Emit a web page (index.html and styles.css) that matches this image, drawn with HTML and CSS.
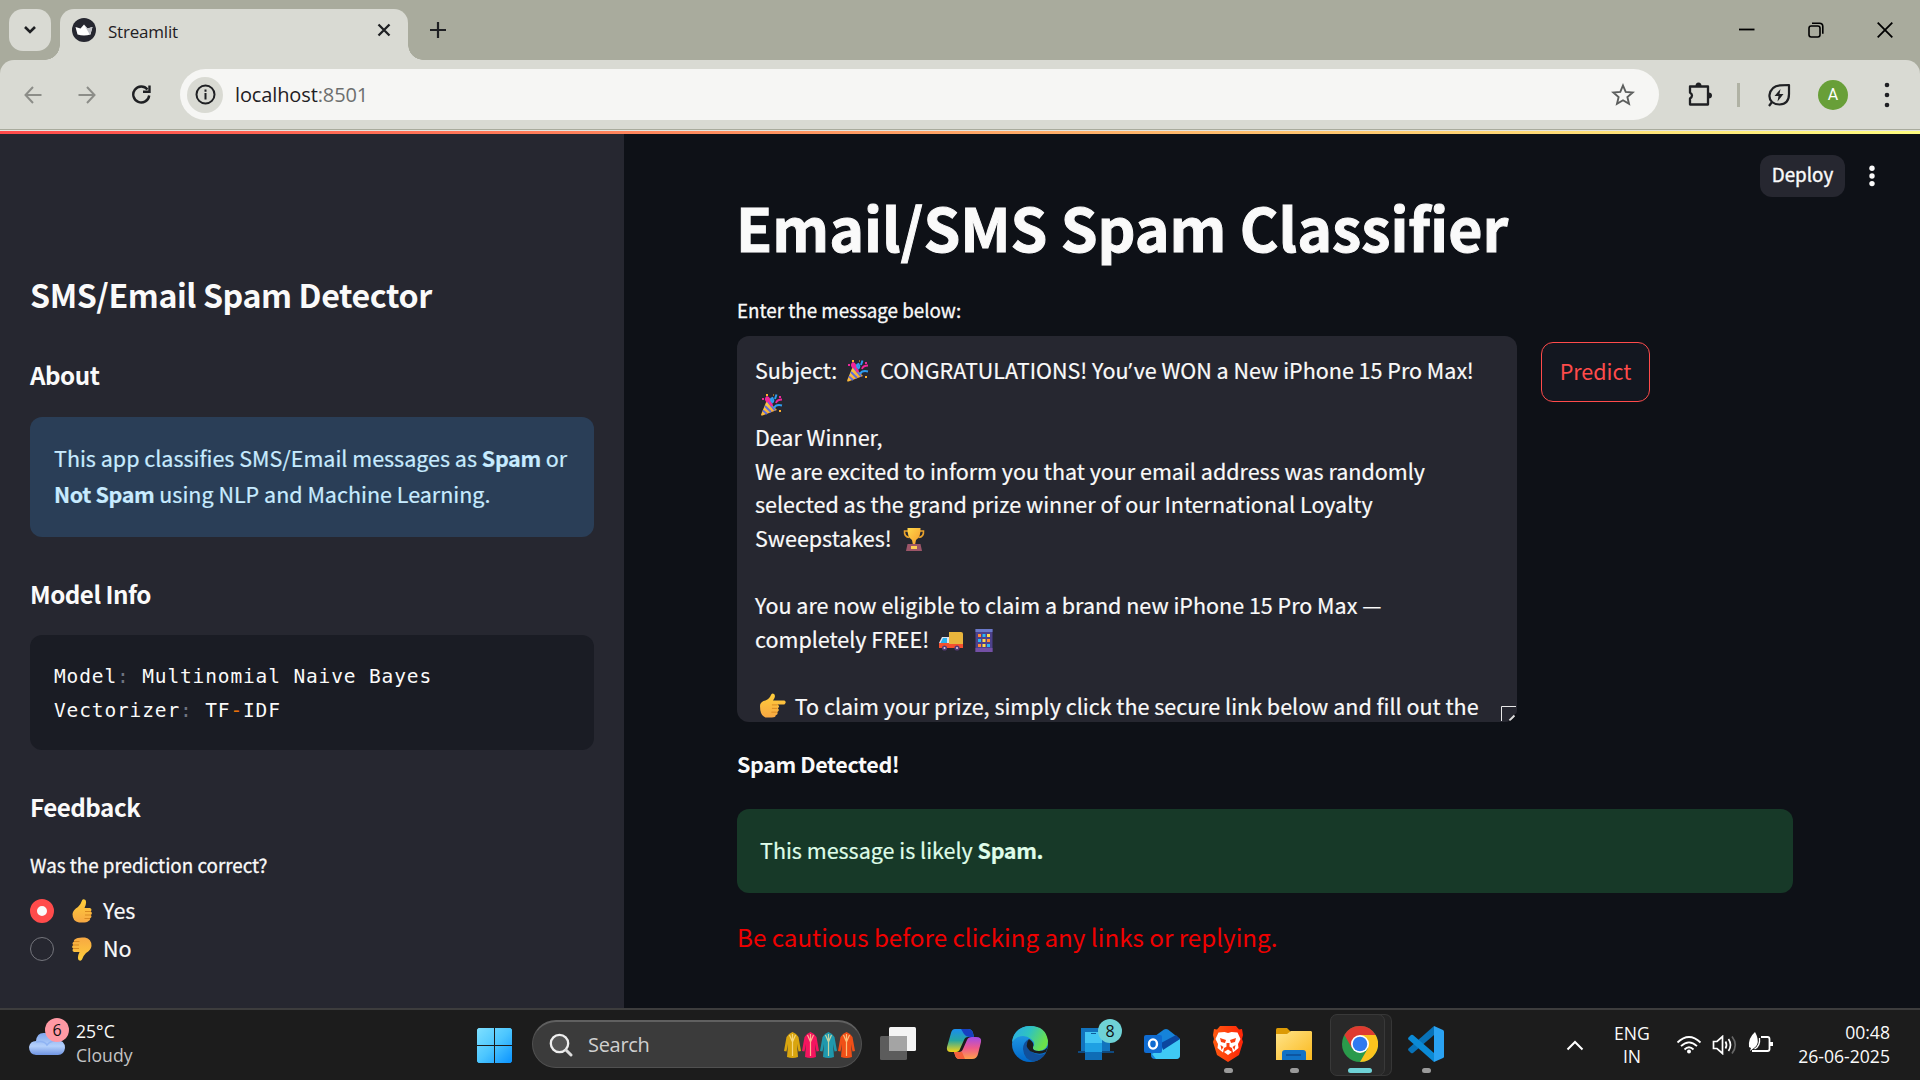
FILE: index.html
```html
<!DOCTYPE html>
<html lang="en">
<head>
<meta charset="utf-8">
<title>Streamlit</title>
<link rel="stylesheet" href="styles.css">
</head>
<body>
<svg class="defs" width="0" height="0" aria-hidden="true">
  <defs>
    <linearGradient id="gold" x1="0" y1="0" x2="1" y2="1"><stop offset="0" stop-color="#ffd84a"/><stop offset="1" stop-color="#f59a2c"/></linearGradient>
    <linearGradient id="hand" x1="0" y1="0" x2="0" y2="1"><stop offset="0" stop-color="#ffcf3a"/><stop offset="1" stop-color="#f7a843"/></linearGradient>
    <linearGradient id="win" x1="0" y1="0" x2="1" y2="1"><stop offset="0" stop-color="#7fe0ff"/><stop offset=".5" stop-color="#4cc6ff"/><stop offset="1" stop-color="#0a93ff"/></linearGradient>
    <linearGradient id="cloud" x1="0" y1="0" x2="0" y2="1"><stop offset="0" stop-color="#7ea6ee"/><stop offset=".6" stop-color="#b4d0fb"/><stop offset="1" stop-color="#6f94e2"/></linearGradient>
    <linearGradient id="edgeA" x1="0" y1="0" x2="1" y2=".4"><stop offset="0" stop-color="#2aa8ec"/><stop offset=".5" stop-color="#2fc3c0"/><stop offset="1" stop-color="#6be04b"/></linearGradient>
    <linearGradient id="edgeB" x1="0" y1="0" x2="0" y2="1"><stop offset="0" stop-color="#2aa6ea"/><stop offset="1" stop-color="#0067c9"/></linearGradient>
    <linearGradient id="copA" x1="0" y1="0" x2="0" y2="1"><stop offset="0" stop-color="#1a8df0"/><stop offset=".5" stop-color="#27a7a0"/><stop offset="1" stop-color="#f5d314"/></linearGradient>
    <linearGradient id="copB" x1="0" y1="0" x2="0" y2="1"><stop offset="0" stop-color="#a14be8"/><stop offset=".5" stop-color="#ee5a8c"/><stop offset="1" stop-color="#ffa04a"/></linearGradient>
    <linearGradient id="folder" x1="0" y1="0" x2="1" y2="1"><stop offset="0" stop-color="#ffe48a"/><stop offset="1" stop-color="#fbb91e"/></linearGradient>
    <linearGradient id="brave" x1="0" y1="0" x2="1" y2="0"><stop offset="0" stop-color="#ff5a10"/><stop offset="1" stop-color="#ff2508"/></linearGradient>
    <symbol id="popper" viewBox="0 0 24 24">
      <path d="M7 7 17 17 2.500 22.500Q0.500 23 1.300 21Z" fill="url(#gold)"/>
      <path d="M5 13 11 19M3 17.500 7 21M8 9 15 17.500" stroke="#5b6be0" stroke-width="1.800"/>
      <path d="M8 9Q5 6 7 4.500Q9 5 10 9L12 13" fill="none" stroke="#f0269a" stroke-width="2.600"/>
      <path d="M13 10Q9 6 12.500 5Q14 7 13 9M15 6 16.500 1.500M14 15Q16 11 22 12.500" fill="none" stroke="#2f9df0" stroke-width="2"/>
      <path d="M16 10Q17 6.500 22 6.500" fill="none" stroke="#f0269a" stroke-width="1.800"/>
      <path d="M6 1h2v2H6zM19 17h2v2h-2zM13 1.500h1v1h-1z" fill="#ffb02e"/><path d="M2 5h2v2H2zM19 3h2v2h-2z" fill="#e82a9a"/>
    </symbol>
    <symbol id="trophy" viewBox="0 0 24 24">
      <path d="M6 4H2.500q-.5 6 5 6.500M18 4h3.500q.5 6-5 6.500" fill="none" stroke="#e9a32c" stroke-width="1.600"/>
      <path d="M5.500 1h13Q19 10 14 13L13 18H11L10 13Q5 10 5.500 1Z" fill="url(#gold)"/>
      <path d="M5.500 17h13l1.500 7H4Z" fill="#9c5568"/><path d="M9 19h6v3H9z" fill="#ffcd54"/>
    </symbol>
    <symbol id="truck" viewBox="0 0 24 24">
      <path d="M10 4h12q2 0 2 2v12H10z" fill="#e8b53c"/><path d="M3 9h7v10H0v-4z" fill="#dfe3f2"/><path d="M4 10h4v5H1.500z" fill="#2bb2ee"/>
      <path d="M0 15h10v1h14v4H0z" fill="#f4502f"/><circle cx="5.500" cy="20" r="2.600" fill="#553a76"/><circle cx="18" cy="20" r="2.600" fill="#553a76"/><circle cx="5.500" cy="20" r="1" fill="#d8d4ea"/><circle cx="18" cy="20" r="1" fill="#d8d4ea"/>
    </symbol>
    <symbol id="tower" viewBox="0 0 24 24">
      <path d="M3.500 1h17v23h-17z" fill="#4d418c"/><path d="M3.500 1h17v3h-17z" fill="#6a78c9"/><path d="M3.500 20h17v4h-17z" fill="#7450a5"/>
      <path d="M6 6h3v3H6zM15 11h3v3h-3zM6 16h3v3H6z" fill="#ff8a35"/><path d="M10.500 6h3v3h-3zM6 11h3v3H6zM15 16h3v3h-3z" fill="#29b6f6"/><path d="M15 6h3v3h-3zM10.500 11h3v3h-3zM10.500 16h3v3h-3z" fill="#ffd84a"/>
    </symbol>
    <symbol id="point" viewBox="0 0 24 24">
      <path d="M0 12Q0 8 5 7Q9 5 10 2Q11-.5 13 1Q15 3 12 7H22.500Q25 8.500 22.500 10.500H16Q19 12 16.500 14Q18.500 16 16 17.500Q17 20 14.500 20.500Q14.500 22.500 11 22.500H5Q0 21 0 12Z" fill="url(#hand)"/>
      <path d="M11 11h5M11 14.200h5M10.500 17.700h5" stroke="#d98a22" stroke-width=".9"/>
    </symbol>
    <symbol id="thumb" viewBox="0 0 24 24">
      <path d="M2.500 15Q3 11 8 8Q11 5 12 1.500Q13-.5 15.500 1Q17 4 14.500 9H20Q22.500 10 20.800 12.500Q23 14 20.800 16Q22.500 18 20 19.500Q20.500 21.500 18.500 22Q17 24 9 23.500Q2.500 22.500 2.500 15Z" fill="url(#hand)"/>
      <path d="M15 12.500h6M15 16h6M14.500 19.500h5.500" stroke="#d98a22" stroke-width="1"/>
    </symbol>
    <symbol id="kurta" viewBox="0 0 17 26">
      <path d="M5 2 8.500 0 12 2 14.500 5 17 19 14.500 19.500 13 12 14 25 Q8.500 27 3 25L4 12 2.500 19.500 0 19 2.500 5Z" fill="currentColor"/><path d="M8.500 2V24M5.500 3 8.500 10 11.500 3" stroke="#ffe7a0" stroke-width="1.200" fill="none" stroke-opacity=".75"/>
    </symbol>
  </defs>
</svg>

<header class="browser">
  <div class="tabstrip">
    <button class="tab-search" aria-label="Search tabs"><svg width="14" height="10" viewBox="0 0 14 10"><path d="M2 2l5 5 5-5" fill="none" stroke="#1f2023" stroke-width="2.600"/></svg></button>
    <div class="tab">
      <svg width="24" height="24" viewBox="0 0 24 24"><circle cx="12" cy="12" r="12" fill="#262730"/><path d="M3.500 9 8.500 10.500 12 6.500 15.500 10.500 20.500 9 18.500 16.500Q12 18.500 5.500 16.500Z" fill="#fff"/><path d="M12 6.500 15.500 10.500 20.500 9 18 17Z" fill="#bfc0c6"/></svg>
      <span class="tab-title">Streamlit</span>
      <svg class="tab-close" width="14" height="14" viewBox="0 0 14 14"><path d="M1.500 1.500l11 11m0-11l-11 11" stroke="#1f2023" stroke-width="2.300"/></svg>
    </div>
    <svg class="tab-new" width="16" height="16" viewBox="0 0 16 16"><path d="M8 0v16M0 8h16" stroke="#1f2023" stroke-width="2.200"/></svg>
    <div class="window-controls">
      <svg width="16" height="16" viewBox="0 0 16 16"><path d="M0 7.500h15.500" stroke="#000" stroke-width="1.800"/></svg>
      <svg width="16" height="16" viewBox="0 0 16 16" fill="none" stroke="#000" stroke-width="1.600"><rect x="1" y="4" width="11" height="11" rx="2.200"/><path d="M4 1.200h7.500q3.300 0 3.300 3.300v7.300"/></svg>
      <svg width="16" height="16" viewBox="0 0 16 16"><path d="M.7.700l14.600 14.600m0-14.600L.7 15.300" stroke="#000" stroke-width="1.800"/></svg>
    </div>
  </div>
  <div class="toolbar">
    <div class="nav">
      <svg width="18" height="18" viewBox="0 0 18 18" fill="none" stroke="#8c8d88" stroke-width="2"><path d="M17.500 9H1.500M9 1L1.500 9 9 17"/></svg>
      <svg width="18" height="18" viewBox="0 0 18 18" fill="none" stroke="#8c8d88" stroke-width="2"><path d="M.5 9h16M9 1l7.500 8L9 17"/></svg>
      <svg width="19" height="19" viewBox="0 0 19 19" fill="none" stroke="#1f2023" stroke-width="2.400"><path d="M17.200 10.500A8 8 0 1 1 15.500 4.500"/><path d="M17.500.5V6.800H11" /></svg>
    </div>
    <div class="omnibox">
      <span class="site-info"><svg width="21" height="21" viewBox="0 0 21 21"><circle cx="10.500" cy="10.500" r="9" fill="none" stroke="#1f2023" stroke-width="2"/><path d="M10.500 9v6.500M10.500 5.500v2.200" stroke="#1f2023" stroke-width="2"/></svg></span>
      <span class="url">localhost<span class="port">:8501</span></span>
      <svg class="star" width="24" height="24" viewBox="0 0 24 24"><path d="M12 2.500l2.700 6.400 7 .6-5.300 4.600 1.600 6.800-6-3.600-6 3.600 1.600-6.800L2.300 9.500l7-.6z" fill="none" stroke="#5c5e5d" stroke-width="1.900"/></svg>
    </div>
    <svg class="ext" width="26" height="26" viewBox="0 0 26 26"><path d="M3 4.500h18v18H3v-6q4-3 0-6z" fill="none" stroke="#1f2023" stroke-width="2.300" stroke-linejoin="round"/><path d="M8.500 4q0-3.500 3-3.500t3 3.500zM21.500 10.500q3.500 0 3.500 3t-3.500 3z" fill="#1f2023"/></svg>
    <span class="divider"></span>
    <svg class="leaf" width="24" height="24" viewBox="0 0 24 24"><path d="M2 23l3-4Q2 16 2.500 12 4 3 13 2.300L22 2v9Q22 21 12.500 21.500 8 21.500 5 19" fill="none" stroke="#1f2023" stroke-width="2.200" stroke-linejoin="round"/><path d="M13.500 6L7.500 13h4l-1 5.500 6-7.500h-4z" fill="#1f2023"/></svg>
    <span class="avatar">A</span>
    <svg class="menu" width="6" height="26" viewBox="0 0 6 26" fill="#1f2023"><circle cx="3" cy="3" r="2.300"/><circle cx="3" cy="13" r="2.300"/><circle cx="3" cy="23" r="2.300"/></svg>
  </div>
  <div class="accent"></div>
</header>

<div class="app">
  <aside class="sidebar">
    <h2 class="side-title">SMS/Email Spam Detector</h2>
    <h3 class="side-head first">About</h3>
    <div class="info">This app classifies SMS/Email messages as <b>Spam</b> or<br><b>Not Spam</b> using NLP and Machine Learning.</div>
    <h3 class="side-head">Model Info</h3>
    <div class="code">
      <div class="line"><span>Model</span><i>:</i><span>Multinomial Naive Bayes</span></div>
      <div class="line"><span>Vectorizer</span><i>:</i><span>TF</span><em>-</em><span>IDF</span></div>
    </div>
    <h3 class="side-head">Feedback</h3>
    <div class="label feedback-label">Was the prediction correct?</div>
    <div class="radios">
      <label class="radio"><span class="dot on"></span><svg class="face" width="24" height="24"><use href="#thumb"/></svg><span class="choice">Yes</span></label>
      <label class="radio"><span class="dot"></span><svg class="face down" width="24" height="24"><use href="#thumb"/></svg><span class="choice">No</span></label>
    </div>
  </aside>
  <main class="main">
    <div class="app-actions">
      <button class="deploy">Deploy</button>
      <svg width="6" height="22" viewBox="0 0 6 22" fill="#fafafa"><circle cx="3" cy="3.200" r="2.700"/><circle cx="3" cy="11" r="2.700"/><circle cx="3" cy="18.600" r="2.700"/></svg>
    </div>
    <h1>Email/SMS Spam Classifier</h1>
    <div class="label message-label">Enter the message below:</div>
    <div class="form-row">
      <div class="message">
        <div>Subject: <svg class="emoji party" width="24" height="24"><use href="#popper"/></svg> CONGRATULATIONS! You<span class="apos">’</span>ve WON a New iPhone 15 Pro Max!</div>
        <div><svg class="emoji" width="24" height="24"><use href="#popper"/></svg></div>
        <div>Dear Winner,</div>
        <div>We are excited to inform you that your email address was randomly</div>
        <div>selected as the grand prize winner of our International Loyalty</div>
        <div>Sweepstakes! <svg class="emoji" width="24" height="24"><use href="#trophy"/></svg></div>
        <div>&nbsp;</div>
        <div>You are now eligible to claim a brand new iPhone 15 Pro Max —</div>
        <div>completely FREE! <svg class="emoji" width="24" height="24"><use href="#truck"/></svg> <svg class="emoji building" width="24" height="24"><use href="#tower"/></svg></div>
        <div>&nbsp;</div>
        <div><svg class="emoji" width="26" height="26"><use href="#point"/></svg> To claim your prize, simply click the secure link below and fill out the</div>
        <svg class="resizer" width="16" height="16" viewBox="0 0 16 16"><path d="M.5 15V.500H15" fill="none" stroke="#e8e8e8"/><path d="M7 15.500L16 6.500V12L12 16Z" fill="#08090c"/><path d="M8.500 14.500l5-5" stroke="#ddd" stroke-width="2"/></svg>
      </div>
      <button class="predict">Predict</button>
    </div>
    <p class="result">Spam Detected!</p>
    <div class="success">This message is likely <b>Spam.</b></div>
    <p class="caution">Be cautious before clicking any links or replying.</p>
  </main>
</div>

<footer class="taskbar">
  <div class="weather">
    <div class="weather-icon">
      <svg width="36" height="24" viewBox="0 0 36 24"><path d="M7 9Q8 0 16 1Q23 1 25 8Q36 7 36 16Q35 23 29 23H7Q0 22 0 15Q1 9 7 9Z" fill="url(#cloud)"/><path d="M7 10q8-2 11 3 3-4 8-4" fill="none" stroke="#8fb3f3" stroke-width="1.500"/></svg>
      <span class="badge alert">6</span>
    </div>
    <div class="weather-text"><span class="temp">25°C</span><span class="cond">Cloudy</span></div>
  </div>
  <svg class="start" width="35" height="35" viewBox="0 0 35 35" fill="url(#win)"><path d="M1.500 0H17v17H0V1.500zM18 0h15.500L35 1.500V17H18zM0 18h17v17H1.500L0 33.500zM18 18h17v15.500L33.500 35H18z"/></svg>
  <div class="search">
    <svg width="24" height="24" viewBox="0 0 24 24"><circle cx="10.500" cy="10.500" r="8.700" fill="#555" stroke="#eee" stroke-width="2.300"/><path d="M17 17l5 5" stroke="#ddd" stroke-width="3" stroke-linecap="round"/></svg>
    <span class="search-text">Search</span>
    <div class="kurtas"><svg class="k1"><use href="#kurta"/></svg><svg class="k2"><use href="#kurta"/></svg><svg class="k3"><use href="#kurta"/></svg><svg class="k4"><use href="#kurta"/></svg></div>
  </div>
  <div class="apps">
    <div class="cell"><svg width="36" height="36" viewBox="0 0 36 36"><rect x="9" y="1" width="27" height="24" rx="1.500" fill="#f4f4f4"/><rect x="0" y="10" width="27" height="24" rx="1.500" fill="#5c5c5c"/><path d="M9 10h18v15H9z" fill="#a4a4a4"/></svg></div>
    <div class="cell"><svg width="36" height="36" viewBox="0 0 36 36"><path d="M9 3h13q4 0 5 4l1 4h-6q-3 0-4 3l-4 9q-1 3-4 3H5q-5 0-4-5L5 7q1-4 4-4z" fill="url(#copA)"/><path d="M15 3h7q4 0 5 4l1 4h-5q-3 0-5-3z" fill="#173fc0"/><path d="M26 11h4q6 0 5 5l-3 12q-1 5-6 5H13q-3 0-4-4l-1-3h5q3 0 4-3l4-9q1-3 5-3z" fill="url(#copB)"/><path d="M8 26h8l3 7h-5q-4 0-5-4z" fill="#f4603c"/></svg></div>
    <div class="cell"><svg width="36" height="36" viewBox="0 0 36 36"><circle cx="18" cy="18" r="18" fill="url(#edgeB)"/><path d="M0 16Q2 1 18 0Q34 0 36 15Q36 24 27 25Q20 25 21 21Q24 17 19 13Q13 8 6 11Q2 13 0 16Z" fill="url(#edgeA)"/><path d="M17 13Q11 16 11 23Q12 34 22 35.500Q30 34 34 27Q27 31 20 26Q14 21 17 13Z" fill="#11509b"/><path d="M17 13Q12 20 18 25Q27 30 34 26L36 20Q34 25 27 25Q20 25 21 21Q23 17 17 13Z" fill="#1c1c1c"/></svg></div>
    <div class="cell"><svg width="36" height="36" viewBox="0 0 36 36"><path d="M3 2h29v23H3z" fill="#1273bd"/><path d="M0 25h36v2H0z" fill="#0f4a80"/><path d="M7 6h17v28H7z" fill="#0f6db6"/><path d="M7 6h17v11H7z" fill="#42c5f4"/><path d="M7 17h17v9H7z" fill="#1ea0e3"/><path d="M13 7h5v1h-5z" fill="#0e5c9a"/></svg><span class="badge count">8</span></div>
    <div class="cell"><svg width="36" height="36" viewBox="0 0 36 36"><path d="M7 13L20 3.500q2-1 4 0L36 13v16q0 4-4 4H11q-4 0-4-4z" fill="#1583da"/><path d="M8 28L36 13v16q0 4-4 4H12z" fill="#3fcaf5"/><path d="M17 17L32 9l4 4-17 11z" fill="#0b47a0"/><rect x="0" y="9" width="18" height="18" rx="2" fill="#0f6bd0"/><ellipse cx="9" cy="18" rx="4" ry="4.600" fill="none" stroke="#fff" stroke-width="2.400"/></svg></div>
    <div class="cell run"><svg width="36" height="36" viewBox="0 0 36 36"><path d="M10 0h16l3 3.500 3-.5 1 6-1 4 1 3-4 13L18 36 7 29 3 16l1-3-1-4 1-6 3 .5z" fill="url(#brave)"/><path d="M8.500 6.500l6-.5 3.500 1 3.500-1 6 .5L30.500 13 28 18l.5 4-5.500 4.500-1-4.500-4-2-4 2-1 4.500L7.500 22 8 18 5.500 13z" fill="#fff"/><path d="M10 12l6 2-1 3-4-1zM26 12l-6 2 1 3 4-1zM16.500 17h3v4l-1.500 1-1.500-1zM10.500 19l3 2-2 3zM25.500 19l-3 2 2 3z" fill="#fb4010"/><path d="M18 23.500l4 2.500-4 3-4-3z" fill="#fff"/></svg></div>
    <div class="cell run"><svg width="36" height="36" viewBox="0 0 36 36"><path d="M0 3.500Q0 2 1.500 2H11l4 4v5H0z" fill="#dc9a05"/><path d="M0 8h11l4-3h20q1 0 1 1.500V34H0z" fill="url(#folder)"/><path d="M6 34v-7q0-3 3-3h18q3 0 3 3v7z" fill="#1172c6"/><path d="M10 29h15" stroke="#0c4d94" stroke-width="1.500"/></svg></div>
    <div class="cell active"><svg width="36" height="36" viewBox="0 0 36 36"><circle cx="18" cy="18" r="18" fill="#2a9a4b"/><path d="M18 18L2.410 9A18 18 0 0 1 33.590 9z" fill="#df3a30"/><path d="M18 9h15.590A18 18 0 0 1 18 36l7.800-13.500z" fill="#fcc31e"/><path d="M10.200 22.500L2.410 9 18 9z" fill="#df3a30"/><circle cx="18" cy="18" r="9" fill="#fff"/><circle cx="18" cy="18" r="7.300" fill="#2f7af0"/></svg></div>
    <div class="cell run"><svg width="36" height="36" viewBox="0 0 36 36"><path d="M26 0v9L5 27q-1 .7-2 0l-2.500-2.500q-.8-1 0-2z" fill="#0872b8"/><path d="M26 36v-9L5 9q-1-.7-2 0L.5 11.500q-.8 1 0 2z" fill="#0b8ad6"/><path d="M26 0l9 4q1 .5 1 1.500v25q0 1-1 1.500l-9 4z" fill="#2aa2f2"/></svg></div>
  </div>
  <div class="tray">
    <svg class="chev" width="18" height="11" viewBox="0 0 18 11"><path d="M1.500 9.500L9 2l7.500 7.500" fill="none" stroke="#fff" stroke-width="2"/></svg>
    <div class="lang"><span>ENG</span><span>IN</span></div>
    <div class="status">
      <svg width="26" height="20" viewBox="0 0 26 20" fill="none" stroke="#fff" stroke-width="1.800"><path d="M1.500 7.500Q13-3.500 24.500 7.500M5 11.200Q13 3.500 21 11.200M8.500 14.500Q13 10 17.500 14.500"/><circle cx="13" cy="16.500" r="2" fill="#fff" stroke="none"/></svg>
      <svg width="26" height="20" viewBox="0 0 26 20" fill="none" stroke="#fff" stroke-width="1.700"><path d="M1.500 6.500H5L10.500 1.500v17L5 13.500H1.500z"/><path d="M13.500 6.500q2 3.500 0 7M16.500 4q4 6 0 12"/><path d="M20 1.500q6.500 8.500 0 17" stroke="#666"/></svg>
      <svg class="battery" width="26" height="22" viewBox="0 0 26 22"><path d="M13 5h6.500q2 0 2 2v10q0 2-2 2H4" fill="none" stroke="#fff" stroke-width="1.800"/><path d="M21.500 10h3.500v4h-3.500z" fill="#fff"/><path d="M7 0Q0 6 1 15l2 1-1 3 4-3Q13 11 7 0Z" fill="#fff"/><path d="M11.500 6q1 8-5 11" fill="none" stroke="#fff" stroke-width="1.300"/></svg>
    </div>
    <div class="clock"><span>00:48</span><span>26-06-2025</span></div>
  </div>
</footer>
</body>
</html>
```
FILE: styles.css
```css
* { box-sizing: border-box; }
body {
  margin: 0;
  width: 1920px;
  height: 1080px;
  overflow: hidden;
  display: flex;
  flex-direction: column;
  background: #0e1117;
  color: #fafafa;
  font-family: "Noto Sans CJK SC", "Open Sans", sans-serif;
  font-size: 21.5px;
  white-space: nowrap;
}
h1, h2, h3, p { margin: 0; }
button { border: 0; padding: 0; font: inherit; color: inherit; }
b { letter-spacing: -.35px; }
svg { display: block; flex: none; }
.defs { position: absolute; }

/* Browser chrome */
.browser { flex: none; height: 134px; background: #a9ab9d; font-family: "Open Sans", sans-serif; }
.tabstrip { display: flex; align-items: center; height: 60px; padding-left: 9px; }
.tab-search { display: flex; align-items: center; justify-content: center; width: 42px; height: 42px; border-radius: 14px; background: #d9dad3; }
.tab { position: relative; display: flex; align-items: center; align-self: flex-end; width: 348px; height: 51px; margin-left: 9px; padding: 0 17px 9px 12px; border-radius: 14px 14px 0 0; background: #d9dad3; color: #1f2023; }
.tab::before, .tab::after { content: ""; position: absolute; bottom: 0; width: 15px; height: 15px; }
.tab::before { left: -15px; background: radial-gradient(circle at 0 0, transparent 14.500px, #d9dad3 15px); }
.tab::after { right: -15px; background: radial-gradient(circle at 100% 0, transparent 14.500px, #d9dad3 15px); }
.tab-title { margin: 2px 0 0 12px; font-size: 17px; letter-spacing: -.2px; }
.tab-close { margin-left: auto; }
.tab-new { margin-left: 22px; }
.window-controls { display: flex; gap: 53px; margin-left: auto; padding-right: 27px; }
.toolbar { display: flex; align-items: center; height: 70px; border-radius: 14px 14px 0 0; border-bottom: 1px solid #a9ab9d; background: #d9dad3; padding-left: 24px; }
.nav { display: flex; align-items: center; gap: 36px; width: 156px; }
.omnibox { display: flex; align-items: center; width: 1479px; height: 51px; border-radius: 26px; background: #f6f6f4; padding: 0 24px 0 7px; color: #1f2023; }
.site-info { display: flex; align-items: center; justify-content: center; width: 36px; height: 36px; border-radius: 50%; background: #d9dad3; }
.url { margin-left: 12px; font-size: 20px; letter-spacing: -.12px; }
.port { color: #6d6f6e; }
.star { margin-left: auto; }
.ext { margin-left: 28px; }
.divider { width: 3px; height: 24px; margin-left: 24px; background: #b0b2a4; }
.leaf { margin-left: 27px; }
.avatar { display: flex; align-items: center; justify-content: center; width: 30px; height: 30px; margin-left: 27px; border-radius: 50%; background: #689f38; color: #fff; font: 16px Roboto, sans-serif; }
.menu { margin-left: 36px; }
.accent { height: 4px; border-top: 1px solid #e4e5df; background: linear-gradient(90deg, #ff4b4b, #fffd80); }

/* App */
.app { flex: none; display: flex; height: 874px; -webkit-text-stroke: .2px; }
.sidebar { width: 624px; padding: 138px 30px 0; background: #262730; }
.side-title { font-size: 32.200px; line-height: 44px; letter-spacing: -.42px; -webkit-text-stroke: 0; }
.side-head { margin-top: 41px; font-size: 24.200px; line-height: 32px; letter-spacing: -.5px; -webkit-text-stroke: 0; }
.side-head.first { margin-top: 43px; }
.info { height: 120px; margin-top: 26px; padding: 23px 24px; border-radius: 12px; background: #2a3e57; color: #c7ebff; line-height: 36px; }
.code { height: 115px; margin-top: 25px; padding: 25px 24px; border-radius: 12px; background: #1a1c24; font: 19.500px/33.600px "DejaVu Sans Mono", monospace; letter-spacing: .86px; -webkit-text-stroke: 0; }
.line { display: flex; height: 33.600px; }
.code i { margin-right: 12.600px; color: #6e7480; font-style: normal; }
.code em { color: #e8710a; font-style: normal; }
.label { font-size: 18.800px; line-height: 30px; -webkit-text-stroke: .3px; }
.feedback-label { margin-top: 27px; }
.radios { margin-top: 12px; }
.radio { display: flex; align-items: center; height: 38px; }
.choice { padding-bottom: 3px; }
.dot { width: 24px; height: 24px; border: 1.500px solid #74757c; border-radius: 50%; }
.dot.on { border: 7.500px solid #ff4b4b; background: #fafafa; }
.face { margin: -1px 9px 0 16px; }
.down { transform: rotate(180deg); }

.main { position: relative; flex: 1; padding: 53px 127px 0 113px; }
.app-actions { position: absolute; top: 21px; right: 45px; display: flex; align-items: center; gap: 24px; }
.deploy { width: 85px; height: 42px; border-radius: 12px; background: #262730; font-size: 18.800px; line-height: 38px; padding-bottom: 4px; -webkit-text-stroke: .4px; }
h1 { font-size: 59px; line-height: 79px; margin-left: -1px; -webkit-text-stroke: 1px; }
.message-label { margin-top: 29px; }
.form-row { display: flex; gap: 24px; height: 386px; margin-top: 11px; }
.message { position: relative; width: 780px; overflow: hidden; padding: 17px 18px 0; border-radius: 12px; background: #262730; line-height: 33.600px; }
.message > div { height: 33.600px; }
.emoji { display: inline-block; margin: 0 4px 0 5px; vertical-align: -4px; }
.party { margin: 0 5px 0 4.500px; }
.building { margin-left: 0; }
.apos { margin-right: 1.500px; font-family: "Open Sans", sans-serif; line-height: 1; }
.resizer { position: absolute; right: 0; bottom: 0; }
.predict { width: 109px; height: 60px; margin-top: 6px; border: 1px solid #ff4b4b; border-radius: 12px; background: #131720; color: #ff4b4b; padding-bottom: 3px; -webkit-text-stroke: 0; }
.result { margin-top: 24px; font-weight: 700; line-height: 36px; letter-spacing: -.4px; -webkit-text-stroke: 0; }
.success { height: 84px; margin-top: 27px; padding: 23px 23px; border-radius: 12px; background: #173928; color: #dffde9; line-height: 36px; }
.caution { margin-top: 24px; color: #f00000; font-size: 24.200px; line-height: 40px; -webkit-text-stroke: 0; }

/* Taskbar */
.taskbar { flex: none; display: flex; align-items: center; height: 72px; border-top: 2px solid #3d3d3d; background: #1c1c1c; font-family: "Open Sans", sans-serif; font-size: 17.600px; }
.taskbar span { display: block; }
.weather { display: flex; width: 477px; padding-left: 29px; margin-top: -4px; }
.weather-icon { position: relative; width: 47px; padding-top: 13px; }
.badge { position: absolute; width: 24px; height: 24px; border-radius: 50%; color: #111; font-size: 16px; line-height: 24px; text-align: center; }
.alert { left: 16px; top: -1px; background: #ff99a4; }
.count { left: 35px; top: 9px; background: #6fd2d6; }
.weather-text span { line-height: 24px; }
.cond { color: #c4c4c4; }
.search { display: flex; align-items: center; width: 330px; height: 48px; margin: -2px 3px 0 20px; padding: 0 6px 0 16px; border: 1px solid #505050; border-top: 2px solid #606060; border-radius: 24px; background: #3b3b3b; }
.search-text { margin-left: 15px; color: #d0d0d0; font-size: 20px; letter-spacing: -.3px; }
.kurtas { display: flex; gap: 1px; margin-left: auto; }
.kurtas svg { width: 17px; height: 26px; }
.k1 { color: #d9a50f; }
.k2 { color: #f5145f; }
.k3 { color: #1f98ad; }
.k4 { color: #f04f17; }
.apps { display: flex; height: 70px; }
.cell { position: relative; display: flex; justify-content: center; width: 66px; padding-top: 16px; }
.run::after { content: ""; position: absolute; left: 29px; bottom: 7px; width: 9px; height: 5px; border-radius: 3px; background: #9a9a9a; }
.active::before { content: ""; position: absolute; left: 3px; top: 4px; width: 53px; height: 60px; border: 1px solid #393939; border-radius: 7px; background: #292929; box-shadow: 7px 0 0 -1px #252525, 7px 0 0 #363636; }
.active::after { content: ""; position: absolute; left: 21px; bottom: 7px; width: 24px; height: 5px; border-radius: 3px; background: #6fd2d6; }
.active svg { position: relative; }
.tray { flex: 1; display: flex; align-items: center; padding-right: 30px; line-height: 23px; }
.chev { margin-left: 107px; }
.lang { width: 60px; margin: -1px 0 0 18px; text-align: center; }
.status { display: flex; align-items: center; gap: 10px; margin-left: 14px; }
.battery { margin-top: -4px; }
.clock { margin: -3px 0 0 auto; text-align: right; line-height: 24px; }
```
